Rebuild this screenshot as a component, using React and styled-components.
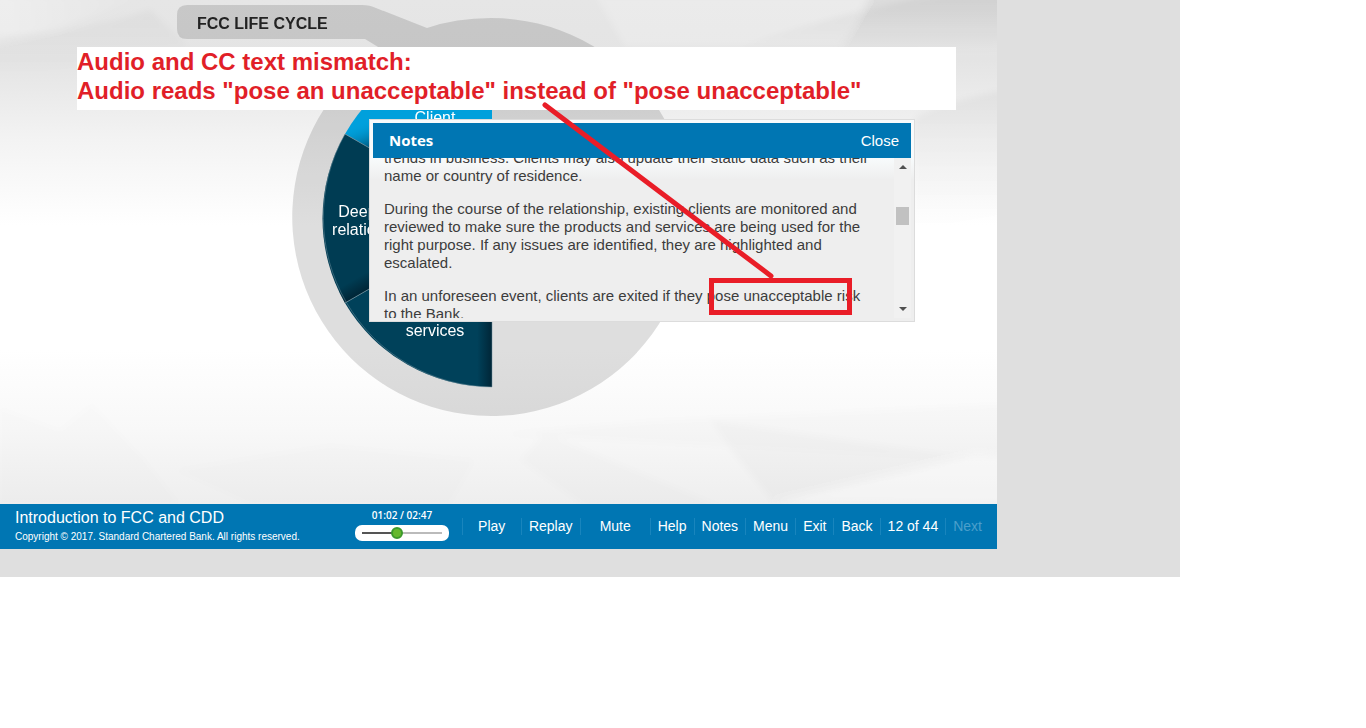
import React, { useState } from "react";
import styled, { createGlobalStyle } from "styled-components";

const GlobalStyle = createGlobalStyle`
  *, *::before, *::after { box-sizing: border-box; }
  body {
    margin: 0;
    background: #fff;
    font-family: "Liberation Sans", Arial, Helvetica, sans-serif;
  }
  h1, h2, p { margin: 0; }
  button { font: inherit; border: 0; background: none; padding: 0; cursor: pointer; }
`;

const Shell = styled.div`
  margin-right: 186px;
  padding: 0 183px 28px 0;
  background: #dfdfdf;
`;

const Player = styled.main`
  display: flex;
  flex-direction: column;
`;

const Stage = styled.section`
  position: relative;
  min-height: 504px;
  padding-top: 5px;
  overflow: hidden;
  background: linear-gradient(#e6e6e6 0, #e4e4e4 60px, #f3f3f3 140px, #fff 225px, #fff 350px, #f8f8f8 430px, #eee 504px);
`;

const Layer = styled.svg`
  position: absolute;
  inset: 0;
  width: 100%;
  height: 100%;
  pointer-events: none;
`;

const Title = styled.h1`
  position: relative;
  margin-left: 197px;
  font-size: 16px;
  line-height: 37px;
  height: 34px;
  color: #222;
`;

const Callout = styled.div`
  position: relative;
  margin: 8px 41px 0 77px;
  min-height: 63px;
  background: #fff;
  color: #e11f28;
  font-size: 24px;
  font-weight: bold;
  line-height: 29px;
`;

const NotesPanel = styled.aside`
  position: absolute;
  top: 119px;
  left: 369px;
  width: 546px;
  padding: 3px;
  border: 1px solid #dcdcdc;
  background: linear-gradient(#f8fbfc 38px, #eee 60px);
`;

const NotesHeader = styled.header`
  display: flex;
  align-items: center;
  justify-content: space-between;
  height: 35px;
  padding: 0 12px 0 16px;
  background: #0076b3;
  color: #fff;
  font-size: 15px;
`;

const NotesTitle = styled.h2`
  font-family: "Open Sans", "Noto Sans", sans-serif;
  font-size: 15px;
  line-height: 20px;
  padding-bottom: 2px;
`;

const CloseButton = styled.button`
  color: #fff;
`;

const NotesBody = styled.div`
  display: flex;
  height: 160px;
  overflow: hidden;
`;

const NotesText = styled.div`
  display: flex;
  flex-direction: column;
  gap: 15px;
  width: 502px;
  margin: -9px 9px 0 0;
  padding-left: 11px;
  color: #3c3c3c;
  font-size: 15px;
  line-height: 18px;
`;

const ScrollTrack = styled.div`
  display: flex;
  flex-direction: column;
  align-items: center;
  width: 17px;
  margin-left: auto;
  padding: 6px 0;
  background: #f1f1f1;
`;

const ScrollThumb = styled.div`
  width: 13px;
  height: 18px;
  margin: 37px 0 auto;
  background: #c1c1c1;
`;

const ScrollArrow = styled.svg`
  width: 8px;
  height: 6px;
  fill: #505050;
`;

const ControlBar = styled.footer`
  display: flex;
  align-items: center;
  height: 45px;
  padding: 0 8px 0 15px;
  background: #0076b3;
  color: #fff;
`;

const CourseInfo = styled.div`
  width: 340px;
  padding-bottom: 2px;
`;

const CourseTitle = styled.h2`
  font-size: 16px;
  font-weight: normal;
  line-height: 22px;
`;

const Copyright = styled.p`
  font-size: 10px;
  line-height: 16px;
`;

const Progress = styled.label`
  display: flex;
  flex-direction: column;
  align-items: center;
  gap: 3px;
  width: 94px;
  padding-bottom: 4px;
  font-family: "Open Sans", "Noto Sans", sans-serif;
  font-size: 10px;
  font-weight: 600;
  line-height: 14px;
`;

const Seek = styled.input`
  appearance: none;
  width: 94px;
  height: 16px;
  margin: 0;
  padding: 0 7px;
  border-radius: 7px;
  background: #fff;

  &::-webkit-slider-runnable-track {
    height: 2px;
    background: linear-gradient(90deg, #555 0 40%, #bbb 40%);
  }
  &::-webkit-slider-thumb {
    appearance: none;
    width: 12px;
    height: 12px;
    margin-top: -5px;
    border: 2px solid #3d9a2c;
    border-radius: 50%;
    background: #66b82e;
  }
`;

const Nav = styled.nav`
  display: flex;
  margin-left: auto;
  font-size: 14px;
  line-height: 17px;
`;

const NavButton = styled.button`
  min-width: ${(p) => p.$wide || 0}px;
  padding: 0 7px;
  border-left: 1px solid #1985bd;
  color: #fff;

  &:disabled { color: #4b9fcb; cursor: default; }
`;

const PageCount = styled.span`
  padding: 0 7px;
  border-left: 1px solid #1985bd;
`;

const NAV_ITEMS = [
  { label: "Play", wide: 59 },
  { label: "Replay", wide: 59 },
  { label: "Mute", wide: 70 },
  { label: "Help" },
  { label: "Notes" },
  { label: "Menu" },
  { label: "Exit" },
  { label: "Back" },
];

function Backdrop() {
  return (
    <Layer aria-hidden="true">
      <defs>
        <linearGradient id="facet" x1="0" y1="0" x2="0" y2="1">
          <stop offset="0" stopColor="#000" stopOpacity="0.05" />
          <stop offset="1" stopColor="#000" stopOpacity="0" />
        </linearGradient>
        <linearGradient id="glow" x1="0" y1="0" x2="1" y2="0">
          <stop offset="0" stopColor="#fff" stopOpacity="0.35" />
          <stop offset="1" stopColor="#fff" stopOpacity="0" />
        </linearGradient>
        <filter id="soften"><feGaussianBlur stdDeviation="3" /></filter>
      </defs>
      <g filter="url(#soften)">
        <path d="M-5 -5H150L60 28L-5 42Z" fill="url(#glow)" />
        <path d="M-5 35Q70 35 150 10L190 47L60 70L-5 75Z" fill="url(#facet)" opacity="0.6" />
        <path d="M595 -5H870L840 47H625Z" fill="#fff" opacity="0.2" />
        <path d="M735 47Q850 10 940 -5H1300V40L900 55Z" fill="url(#facet)" />
        <path d="M870 -5H1300V30L840 50Z" fill="url(#facet)" />
        <path d="M915 118Q960 85 1300 50V160L915 230Z" fill="url(#facet)" />
        <path d="M0 408L60 430L92 404L145 460L180 504H0Z" fill="#000" opacity="0.006" />
        <path d="M175 470L330 445L475 460L450 504H250Z" fill="#000" opacity="0.008" />
        <path d="M500 434L650 421L1300 390V470L970 460Z" fill="#000" opacity="0.012" />
        <path d="M545 433L730 510H590L520 460Z" fill="#000" opacity="0.01" />
        <path d="M710 420L970 458L775 504L735 455Z" fill="#000" opacity="0.018" />
        <path d="M775 502L975 455L1300 475V510Z" fill="#fff" opacity="0.3" />
      </g>
    </Layer>
  );
}

function LifeCycleWheel() {
  return (
    <Layer role="img" aria-label="Client life cycle wheel">
      <defs>
        <linearGradient id="shadeRight">
          <stop offset="0.9" stopColor="#001a28" stopOpacity="0" />
          <stop offset="1" stopColor="#001a28" stopOpacity="0.7" />
        </linearGradient>
        <linearGradient id="shadeLow" gradientUnits="userSpaceOnUse" x1="348" y1="283" x2="356" y2="297">
          <stop offset="0" stopColor="#001a28" stopOpacity="0" />
          <stop offset="1" stopColor="#001a28" stopOpacity="0.7" />
        </linearGradient>
        <linearGradient id="shadeBlue" gradientUnits="userSpaceOnUse" x1="360" y1="123" x2="369" y2="146">
          <stop offset="0" stopColor="#00a0dc" stopOpacity="0" />
          <stop offset="1" stopColor="#005f86" />
        </linearGradient>
      </defs>
      <path
        opacity="0.13"
        d="M187 5H362Q370 5 376 8L427 28Q456 18 491 18A199 199 0 1 1 383 50L365 39H187Q177 39 177 29V15Q177 5 187 5Z"
      />
      <path d="M492 218V48A170 170 0 0 0 345 134Z" fill="#00a0dc" />
      <path d="M345 134L369 148V110H362Z" fill="url(#shadeBlue)" />
      <path d="M492 218L345 134A170 170 0 0 0 345 303Z" fill="#003c53" />
      <path d="M492 218L345 134A170 170 0 0 0 345 303Z" fill="url(#shadeLow)" />
      <path d="M492 218L345 303A170 170 0 0 0 492 387Z" fill="#00415a" />
      <path d="M492 218L345 303A170 170 0 0 0 492 387Z" fill="url(#shadeRight)" />
      <path d="M345 134L492 218L345 303" fill="none" stroke="#7c9ba8" opacity="0.7" />
      <path d="M345 134A170 170 0 0 0 492 387V218" fill="none" stroke="#6c8d9b" opacity="0.5" />
      <g fill="#fff" fontSize="16" textAnchor="middle">
        <text x="435" y="123">Client</text>
        <text x="377" y="217">Deepening</text>
        <text x="377" y="235">relationships</text>
        <text x="435" y="336">services</text>
      </g>
    </Layer>
  );
}

function Notes() {
  return (
    <NotesPanel>
      <NotesHeader>
        <NotesTitle>Notes</NotesTitle>
        <CloseButton type="button">Close</CloseButton>
      </NotesHeader>
      <NotesBody>
        <NotesText>
          <p>
            trends in business. Clients may also update their static data such
            as their name or country of residence.
          </p>
          <p>
            During the course of the relationship, existing clients are
            monitored and reviewed to make sure the products and services are
            being used for the right purpose. If any issues are identified, they
            are highlighted and escalated.
          </p>
          <p>
            In an unforeseen event, clients are exited if they pose unacceptable
            risk to the Bank.
          </p>
        </NotesText>
        <ScrollTrack>
          <ScrollArrow viewBox="0 0 8 6"><path d="M0 5L4 1L8 5Z" /></ScrollArrow>
          <ScrollThumb />
          <ScrollArrow viewBox="0 0 8 6"><path d="M0 1L4 5L8 1Z" /></ScrollArrow>
        </ScrollTrack>
      </NotesBody>
    </NotesPanel>
  );
}

function Controls() {
  const [position, setPosition] = useState(43);
  return (
    <ControlBar>
      <CourseInfo>
        <CourseTitle>Introduction to FCC and CDD</CourseTitle>
        <Copyright>Copyright © 2017. Standard Chartered Bank. All rights reserved.</Copyright>
      </CourseInfo>
      <Progress>
        01:02 / 02:47
        <Seek
          type="range"
          min="0"
          max="100"
          value={position}
          onChange={(e) => setPosition(Number(e.target.value))}
        />
      </Progress>
      <Nav>
        {NAV_ITEMS.map(({ label, wide }) => (
          <NavButton key={label} type="button" $wide={wide}>{label}</NavButton>
        ))}
        <PageCount>12 of 44</PageCount>
        <NavButton type="button" disabled>Next</NavButton>
      </Nav>
    </ControlBar>
  );
}

export default function App() {
  return (
    <>
      <GlobalStyle />
      <Shell>
        <Player>
          <Stage>
            <Backdrop />
            <LifeCycleWheel />
            <Title>FCC LIFE CYCLE</Title>
            <Callout>
              <p>Audio and CC text mismatch:</p>
              <p>Audio reads "pose an unacceptable" instead of "pose unacceptable"</p>
            </Callout>
            <Notes />
            <Layer aria-hidden="true" fill="none" stroke="#e91d27" strokeWidth="5">
              <path d="M545 105L771 276" strokeLinecap="round" />
              <rect x="711.5" y="280.5" width="138" height="32" />
            </Layer>
          </Stage>
          <Controls />
        </Player>
      </Shell>
    </>
  );
}
